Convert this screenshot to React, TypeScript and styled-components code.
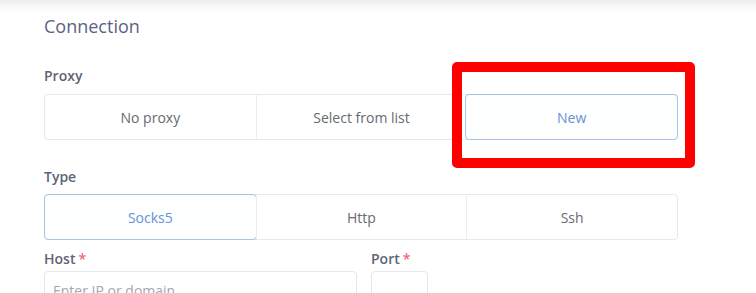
import React from "react";
import styled, { createGlobalStyle } from "styled-components";

const GlobalStyle = createGlobalStyle`
  html, body {
    margin: 0;
    padding: 0;
    background: #ffffff;
    font-family: "Open Sans", "Liberation Sans", Arial, sans-serif;
  }
`;

const Page = styled.div`
  position: relative;
  width: 756px;
  height: 293px;
  overflow: hidden;
  background: #ffffff;
`;

const TopShade = styled.div`
  height: 14px;
  background: linear-gradient(180deg, #ededed 0%, #f7f7f7 45%, #ffffff 100%);
`;

const Form = styled.div`
  width: 634px;
  padding-left: 44px;
  display: flex;
  flex-direction: column;
`;

const Title = styled.h2`
  margin: 0;
  font-size: 18px;
  line-height: 24px;
  font-weight: 500;
  color: #5c6283;
`;

const Label = styled.div<{ $top: number; $bottom: number }>`
  margin-top: ${(p) => p.$top}px;
  margin-bottom: ${(p) => p.$bottom}px;
  font-size: 14px;
  line-height: 18px;
  font-weight: 600;
  color: #5f6476;
`;

const Required = styled.span`
  color: #ef6b73;
  margin-left: 3px;
`;

const Group = styled.div`
  display: grid;
  grid-template-columns: repeat(3, 1fr);
  height: 44px;
  border: 1px solid #e9e9eb;
  border-radius: 4px;
`;

const Segment = styled.div<{ $active?: boolean }>`
  display: flex;
  align-items: center;
  justify-content: center;
  font-size: 14px;
  color: ${(p) => (p.$active ? "#6a90d6" : "#666a72")};
  border-left: 1px solid #ececee;
  background: ${(p) => (p.$active ? "#fdfefe" : "transparent")};
  &:first-child {
    border-left: none;
  }
  ${(p) =>
    p.$active &&
    `
    margin: -1px;
    border: 1px solid #a9c2ea;
    border-radius: 4px;
    &:first-child { border-left: 1px solid #a9c2ea; }
  `}
`;

const FieldRow = styled.div`
  display: grid;
  grid-template-columns: 313px 57px;
  column-gap: 14px;
`;

const Field = styled.div`
  display: flex;
  flex-direction: column;
`;

const Input = styled.div`
  height: 34px;
  border: 1px solid #e6e7ea;
  border-radius: 4px;
  padding: 9px 8px 0;
  box-sizing: border-box;
  font-size: 14px;
  color: #a4a7ad;
`;

const Highlight = styled.div`
  position: absolute;
  left: 452px;
  top: 62px;
  width: 243px;
  height: 106px;
  box-sizing: border-box;
  border: 10px solid #ff0000;
  border-radius: 5px;
  pointer-events: none;
`;

const SegmentGroup = ({ options, active }: { options: string[]; active: number }) => (
  <Group>
    {options.map((o, i) => (
      <Segment key={o} $active={i === active}>
        {o}
      </Segment>
    ))}
  </Group>
);

export default function App() {
  return (
    <Page>
      <GlobalStyle />
      <TopShade />
      <Form>
        <Title>Connection</Title>
        <Label $top={29} $bottom={9}>Proxy</Label>
        <SegmentGroup options={["No proxy", "Select from list", "New"]} active={2} />
        <Label $top={28} $bottom={8}>Type</Label>
        <SegmentGroup options={["Socks5", "Http", "Ssh"]} active={0} />
        <FieldRow>
          <Field>
            <Label $top={10} $bottom={3}>
              Host<Required>*</Required>
            </Label>
            <Input>Enter IP or domain</Input>
          </Field>
          <Field>
            <Label $top={10} $bottom={3}>
              Port<Required>*</Required>
            </Label>
            <Input />
          </Field>
        </FieldRow>
      </Form>
      <Highlight />
    </Page>
  );
}
